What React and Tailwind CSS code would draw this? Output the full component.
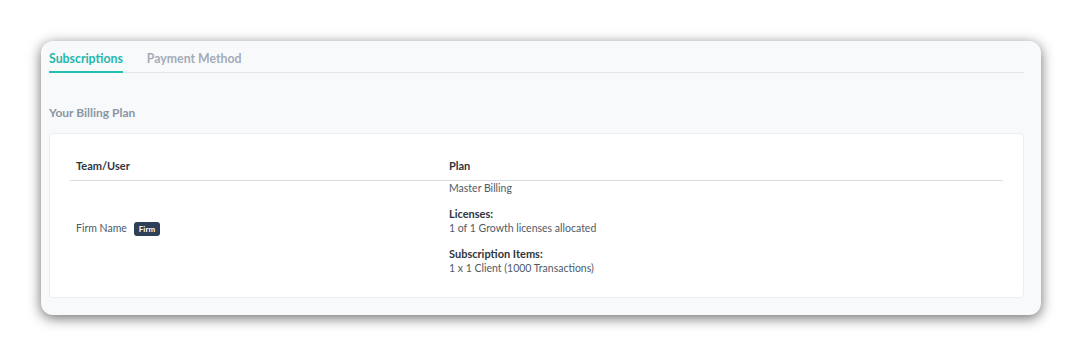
import React, { useState } from "react";

const planItems = [
  { label: null, value: "Master Billing" },
  { label: "Licenses:", value: "1 of 1 Growth licenses allocated" },
  { label: "Subscription Items:", value: "1 x 1 Client (1000 Transactions)" },
];

const App = () => {
  const [tab, setTab] = useState("Subscriptions");
  const tabs = ["Subscriptions", "Payment Method"];

  return (
    <div
      className="min-h-screen bg-white pt-[41px] pl-[41px]"
      style={{ fontFamily: "Lato, 'Noto Sans', sans-serif" }}
    >
      <div className="w-[1000px] rounded-xl bg-[#f8f9fb] pl-2 pr-[17px] pt-[10px] pb-[17px] shadow-[0_3px_13px_rgba(0,0,0,0.58)]">
        <div className="flex gap-6 border-b border-[#e2e6eb]">
          {tabs.map((t) => (
            <button
              key={t}
              onClick={() => setTab(t)}
              className={
                tab === t
                  ? "-mb-px border-b-2 border-[#20bfb2] pb-[4px] text-[12.3px] font-bold leading-[16px] text-[#1fb8ab]"
                  : "-mb-px border-b-2 border-transparent pb-[4px] text-[12.3px] font-bold leading-[16px] text-[#a3acb6]"
              }
            >
              {t}
            </button>
          ))}
        </div>

        <p className="mt-[32px] text-[12px] font-bold leading-[16px] text-[#8a96a3]">
          Your Billing Plan
        </p>

        <div className="mt-[12px] rounded-sm border border-[#eceef2] bg-white px-[20px] pt-[24px] pb-[21px]">
          <div className="grid grid-cols-[373px_1fr] border-b border-[#d9dce0] pb-[6px] text-[11px] font-bold leading-[16px] text-[#2f3640]">
            <div className="pl-[6px]">Team/User</div>
            <div className="pl-[6px]">Plan</div>
          </div>
          <div className="grid grid-cols-[373px_1fr] text-[10.5px] leading-[15px] text-[#505a67]">
            <div className="flex items-center gap-[7px] pl-[6px]">
              <span>Firm Name</span>
              <span className="rounded-[3px] bg-[#2e4058] px-[5px] py-[2px] text-[8px] font-bold leading-[10px] text-white">
                Firm
              </span>
            </div>
            <div className="flex flex-col gap-[10px] pl-[6px]">
              {planItems.map((item, i) => (
                <div key={i}>
                  {item.label && (
                    <div className="text-[11px] font-bold text-[#2f3640]">{item.label}</div>
                  )}
                  <div>{item.value}</div>
                </div>
              ))}
            </div>
          </div>
        </div>
      </div>
    </div>
  );
};

export default App;
